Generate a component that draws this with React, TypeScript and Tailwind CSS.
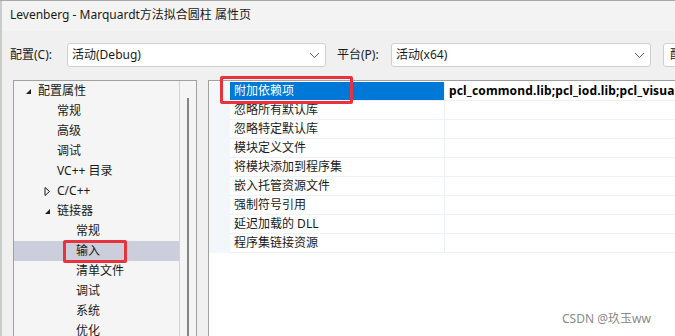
import React from "react";

const font = { fontFamily: '"Noto Sans", "Noto Sans CJK SC", sans-serif' };

function Chevron() {
  return (
    <svg width="11" height="7" viewBox="0 0 11 7" className="shrink-0">
      <path d="M1 1 L5.5 5.5 L10 1" fill="none" stroke="#606060" strokeWidth="1" />
    </svg>
  );
}

function Expanded() {
  return (
    <svg width="7" height="7" viewBox="0 0 7 7" className="shrink-0">
      <path d="M6 1 L6 6 L1 6 Z" fill="#1e1e1e" />
    </svg>
  );
}

function Collapsed() {
  return (
    <svg width="7" height="9" viewBox="0 0 7 9" className="shrink-0">
      <path d="M1 0.5 L5.5 4.5 L1 8.5 Z" fill="none" stroke="#1e1e1e" strokeWidth="1" />
    </svg>
  );
}

type TreeItem = { label: string; indent: number; icon?: "exp" | "col"; selected?: boolean };

const tree: TreeItem[] = [
  { label: "配置属性", indent: 0, icon: "exp" },
  { label: "常规", indent: 1 },
  { label: "高级", indent: 1 },
  { label: "调试", indent: 1 },
  { label: "VC++ 目录", indent: 1 },
  { label: "C/C++", indent: 1, icon: "col" },
  { label: "链接器", indent: 1, icon: "exp" },
  { label: "常规", indent: 2 },
  { label: "输入", indent: 2, selected: true },
  { label: "清单文件", indent: 2 },
  { label: "调试", indent: 2 },
  { label: "系统", indent: 2 },
  { label: "优化", indent: 2 },
];

const props = [
  "附加依赖项",
  "忽略所有默认库",
  "忽略特定默认库",
  "模块定义文件",
  "将模块添加到程序集",
  "嵌入托管资源文件",
  "强制符号引用",
  "延迟加载的 DLL",
  "程序集链接资源",
];

export default function App() {
  return (
    <div
      className="relative w-[675px] h-[336px] overflow-hidden bg-[#f0f0f0] text-[12px] text-[#1a1a1a] border-t border-[#a8a8a8]"
      style={font}
    >
      <div className="absolute left-0 top-0 bottom-0 w-[2px] bg-[#c8cdc8]" />
      {/* title bar */}
      <div className="h-[30px] bg-[#f3f3f3] flex items-center pl-[10px] pb-[2px]">
        <span className="leading-none">Levenberg - Marquardt方法拟合圆柱 属性页</span>
      </div>
      {/* config row */}
      <div className="h-[49px] flex items-start pt-[12px] whitespace-nowrap">
        <span className="ml-[10px] w-[57px] shrink-0 mt-[4px] leading-[16px]">配置(C):</span>
        <div className="w-[259px] shrink-0 h-[24px] bg-white border border-[#d0d0d0] rounded-[3px] flex items-center justify-between pl-[4px] pr-[5px]">
          <span>活动(Debug)</span>
          <Chevron />
        </div>
        <span className="ml-[11px] w-[54px] shrink-0 mt-[4px] leading-[16px]">平台(P):</span>
        <div className="w-[260px] shrink-0 h-[24px] bg-white border border-[#d0d0d0] rounded-[3px] flex items-center justify-between pl-[4px] pr-[5px]">
          <span>活动(x64)</span>
          <Chevron />
        </div>
        <div className="ml-[12px] w-[90px] h-[24px] bg-white border border-[#d0d0d0] rounded-[3px] flex items-center pl-[6px] shrink-0 overflow-hidden">
          <span className="text-[#1a1a1a]">配置管理器(O)...</span>
        </div>
      </div>
      {/* content */}
      <div className="flex h-[257px]">
        {/* tree */}
        <div className="ml-[13px] w-[184px] shrink-0 h-full bg-[#f5f5f5] border border-b-0 border-[#a0a0a0] flex">
          <div className="w-[166px] pt-0">
            {tree.map((t, i) => (
              <div
                key={i}
                className={`h-[20px] flex items-center ${t.selected ? "bg-[#cccedb]" : ""}`}
              >
                <div
                  className="flex items-center"
                  style={{ paddingLeft: 11 + t.indent * 19 }}
                >
                  <span className="w-[13px] flex items-center">
                    {t.icon === "exp" ? <Expanded /> : t.icon === "col" ? <Collapsed /> : null}
                  </span>
                  <span className="leading-none">{t.label}</span>
                </div>
              </div>
            ))}
          </div>
          <div className="w-[17px] h-full border-l border-[#d4d4d4] flex justify-center pt-[17px]">
            <div className="w-[2px] h-full bg-[#858585]" />
          </div>
        </div>
        {/* property grid */}
        <div className="ml-[11px] flex-1 h-full bg-white border-l border-t border-[#a0a0a0] flex pt-[1px]">
          <div className="w-[21px] h-[171px] bg-[#f3f6fb]" />
          <div className="flex-1">
            {props.map((p, i) => (
              <div key={i} className="h-[19px] flex border-b border-[#eef1f8]">
                <div
                  className={`w-[214px] flex items-center pl-[4px] ${
                    i === 0 ? "bg-[#0078d7] text-white" : ""
                  }`}
                >
                  <span className="leading-none">{p}</span>
                </div>
                <div className="flex-1 border-l border-[#eef1f8] flex items-center pl-[4px] whitespace-nowrap overflow-hidden">
                  {i === 0 ? (
                    <span className="font-bold leading-none text-black tracking-[0.15px]">pcl_commond.lib;pcl_iod.lib;pcl_visualization.lib</span>
                  ) : null}
                </div>
              </div>
            ))}
          </div>
        </div>
      </div>
      {/* annotation boxes */}
      <div className="absolute left-[220px] top-[75px] w-[133px] h-[28px] border-[3px] border-[#e8323c] rounded-[2px]" />
      <div className="absolute left-[63px] top-[239px] w-[64px] h-[23px] border-[3px] border-[#e8323c] rounded-[2px]" />
      {/* watermark */}
      <div className="absolute left-[562px] top-[312px] text-[12px] text-[#8a8a8a] leading-none">CSDN @玖玉ww</div>
    </div>
  );
}
